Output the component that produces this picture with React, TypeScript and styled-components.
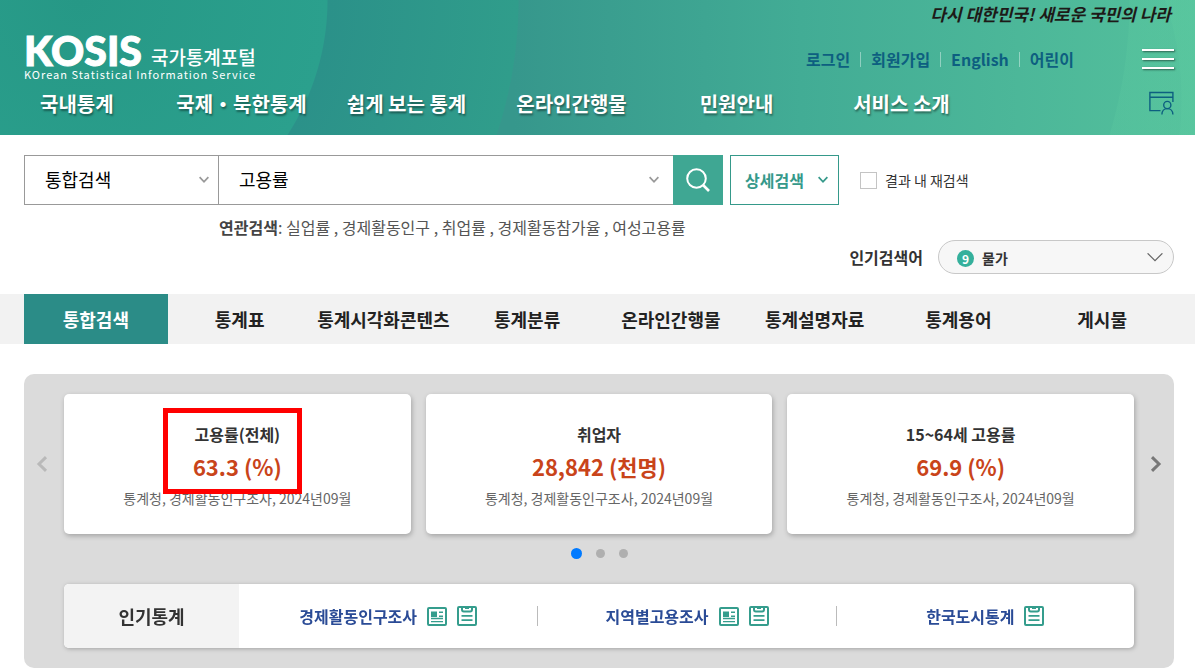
import React from "react";
import styled, { createGlobalStyle } from "styled-components";

const GlobalStyle = createGlobalStyle`
  *, *::before, *::after { box-sizing: border-box; }
  body {
    margin: 0;
    background: #fff;
    color: #222;
    font-family: "Noto Sans CJK KR", "Noto Sans", sans-serif;
    font-size: 16px;
    line-height: 24px;
  }
  button, input, select { font: inherit; color: inherit; margin: 0; }
  button { border: 0; padding: 0; background: none; cursor: pointer; }
  a { color: inherit; text-decoration: none; }
  ul { list-style: none; margin: 0; padding: 0; }
  h1, h2, h3, p { margin: 0; font-size: inherit; font-weight: inherit; }
  svg { display: block; flex: none; }
`;

/* ---------- header ---------- */

const Header = styled.header`
  padding: 0 21px 10px 24px;
  background:
    radial-gradient(circle 248px at 80px 0, #269886 0, #2ba08d 247px, transparent 248px),
    radial-gradient(circle 426px at 93px 0, #2b9189 0, #2b9189 235px, #309d8b 425px, transparent 426px),
    radial-gradient(circle 312px at calc(100% - 325px) 100px, transparent 311px, rgba(92, 202, 160, 0.4) 312px) right top / 50px 100% no-repeat,
    radial-gradient(circle 465px at calc(100% - 530px) 0, transparent 464px, rgba(92, 202, 160, 0.3) 465px) right top / 120px 100% no-repeat,
    linear-gradient(90deg, #36978c 0, #36978c 43%, #42ac95 67%, #54c09c 100%);
`;

const Slogan = styled.p`
  height: 35px;
  padding-right: 3px;
  color: #1d1a18;
  font-size: 17px;
  font-style: italic;
  font-weight: 700;
  line-height: 28px;
  text-align: right;
`;

const Brand = styled.div`
  display: flex;
  align-items: center;
  height: 48px;
`;

const Logo = styled.a`
  display: block;
  height: 48px;
  margin-right: auto;
  color: #fff;
`;

const LogoTop = styled.span`
  display: flex;
  align-items: flex-end;
  gap: 9px;
  height: 32px;
`;

const LogoMark = styled.strong`
  font-family: Lato, sans-serif;
  font-size: 41px;
  font-weight: 900;
  line-height: 32px;
  -webkit-text-stroke: 1px #fff;
`;

const LogoName = styled.span`
  font-size: 19px;
  font-weight: 500;
  line-height: 20px;
`;

const LogoTag = styled.span`
  display: block;
  font-size: 11px;
  letter-spacing: 1px;
  line-height: 14px;
`;

const Utils = styled.ul`
  display: flex;
  margin-right: 68px;
  color: #0d5f80;
  font-weight: 700;

  li + li::before {
    content: "";
    display: inline-block;
    width: 1px;
    height: 15px;
    margin: 0 10px;
    background: rgba(255, 255, 255, 0.4);
    vertical-align: -1px;
  }
`;

const MenuButton = styled.button`
  display: flex;
  flex-direction: column;
  gap: 7px;
  width: 32px;

  span {
    height: 2px;
    background: #fff;
    box-shadow: 1px 1px 2px rgba(0, 0, 0, 0.5);
  }
`;

const NavRow = styled.div`
  display: flex;
  align-items: center;
  height: 42px;
`;

const Nav = styled.nav`
  flex: 1;
  display: grid;
  grid-template-columns: 9fr repeat(5, 11fr);
  margin-right: 165px;
  color: #fff;
  font-size: 20px;
  font-weight: 700;
  line-height: 28px;
  text-align: center;
  text-shadow: 1px 2px 2px rgba(0, 0, 0, 0.4);
  white-space: nowrap;

  a:first-child {
    padding-left: 16px;
    text-align: left;
  }
`;

/* ---------- search ---------- */

const SearchArea = styled.section`
  padding: 20px 21px 20px 24px;
`;

const SearchForm = styled.form`
  display: flex;
  align-items: center;
  height: 50px;
  font-size: 18px;
`;

const FieldBox = styled.div<{ $width: string; $joined?: boolean }>`
  position: relative;
  width: ${(p) => p.$width};
  height: 50px;
  border: 1px solid #999;
  ${(p) => p.$joined && "border-left: 0; border-right: 0;"}
  color: #000;

  select, input {
    width: 100%;
    height: 100%;
    padding: 0 20px 2px;
    border: 0;
    outline: 0;
    background: transparent;
    appearance: none;
  }

  svg, button {
    position: absolute;
    top: 20px;
    right: 9px;
    pointer-events: none;
  }
  button svg { position: static; }
  button { right: 14px; }
`;

const SearchButton = styled.button`
  display: flex;
  align-items: center;
  justify-content: center;
  width: 50px;
  height: 50px;
  background: #3fa793;
`;

const DetailButton = styled.button`
  display: flex;
  align-items: center;
  justify-content: space-between;
  width: 109px;
  height: 50px;
  margin: 0 21px 0 7px;
  padding: 0 10px 0 14px;
  border: 1px solid #35998a;
  color: #35998a;
  font-size: 16px;
  font-weight: 700;
`;

const Recheck = styled.label`
  display: flex;
  align-items: center;
  gap: 8px;
  color: #333;
  font-size: 14px;

  input {
    width: 17px;
    height: 17px;
    border: 1px solid #c4c4c4;
    background: #fff;
    appearance: none;
  }
`;

const Related = styled.p`
  padding: 10px 0 1px 195px;
  color: #555;

  strong { color: #444; }
`;

const Popular = styled.div`
  display: flex;
  align-items: center;
  justify-content: flex-end;
  gap: 15px;
  color: #333;
  font-weight: 700;
`;

const PopularButton = styled.button`
  display: flex;
  align-items: center;
  gap: 8px;
  width: 236px;
  height: 34px;
  padding: 2px 10px 0 18px;
  border: 1px solid #c8c8c8;
  border-radius: 17px;
  background: #f7f7f7;
  font-size: 14px;
  font-weight: 700;

  svg { margin-left: auto; }
`;

const Rank = styled.span`
  width: 17px;
  height: 17px;
  border-radius: 50%;
  background: #35b09c;
  color: #fff;
  font-size: 12px;
  font-weight: 700;
  line-height: 17px;
`;

/* ---------- tabs ---------- */

const TabBar = styled.nav`
  display: grid;
  grid-template-columns: repeat(8, 1fr);
  padding: 0 21px 0 24px;
  background: #f2f2f2;
`;

const Tab = styled.a<{ $active?: boolean }>`
  background: ${(p) => (p.$active ? "#2b8c87" : "transparent")};
  color: ${(p) => (p.$active ? "#fff" : "#222")};
  font-size: 18px;
  font-weight: 700;
  line-height: 50px;
  text-align: center;
  white-space: nowrap;
`;

/* ---------- indicator panel ---------- */

const Panel = styled.section`
  margin: 30px 21px 0 24px;
  padding: 20px 0;
  border-radius: 10px;
  background: #dbdbdb;
`;

const Slider = styled.div`
  display: flex;
`;

const Arrow = styled.button<{ $back?: boolean }>`
  display: flex;
  align-items: center;
  justify-content: ${(p) => (p.$back ? "flex-start" : "flex-end")};
  width: 40px;
  padding: 0 12px;
  color: ${(p) => (p.$back ? "#b9b9b9" : "#777")};
`;

const Cards = styled.div`
  flex: 1;
  display: grid;
  grid-template-columns: repeat(3, 1fr);
  gap: 15px;
`;

const Card = styled.article`
  position: relative;
  padding: 27px 10px 22px;
  border-radius: 5px;
  background: #fff;
  box-shadow: 1px 2px 5px rgba(0, 0, 0, 0.25);
  text-align: center;
`;

const CardTitle = styled.h3`
  color: #333;
  font-weight: 700;
  line-height: 27px;
`;

const CardValue = styled.p`
  color: #c9441a;
  font-size: 22px;
  font-weight: 700;
  line-height: 36px;
`;

const CardSource = styled.p`
  color: #666;
  font-size: 14px;
  line-height: 28px;
`;

const Highlight = styled.span`
  position: absolute;
  top: 14px;
  left: calc(50% - 74px);
  width: 139px;
  height: 86px;
  border: 5px solid #f00;
`;

const Dots = styled.div`
  display: flex;
  align-items: center;
  justify-content: center;
  gap: 14px;
  height: 50px;
  padding-bottom: 12px;
`;

const Dot = styled.button<{ $active?: boolean }>`
  width: ${(p) => (p.$active ? 11 : 9)}px;
  height: ${(p) => (p.$active ? 11 : 9)}px;
  border-radius: 50%;
  background: ${(p) => (p.$active ? "#007aff" : "#afafaf")};
`;

const HotShadow = styled.div`
  filter: drop-shadow(1px 1px 2px rgba(0, 0, 0, 0.25));
`;

const Hot = styled.div`
  display: flex;
  height: 64px;
  margin: 0 40px;
  border-radius: 5px;
  overflow: hidden;
  background: #fff;
`;

const HotTitle = styled.h2`
  width: 175px;
  background: #f3f3f3;
  color: #333;
  font-size: 18px;
  font-weight: 700;
  line-height: 64px;
  text-align: center;
`;

const HotList = styled.ul`
  flex: 1;
  display: grid;
  grid-template-columns: repeat(3, 1fr);
  align-items: center;
`;

const HotItem = styled.li`
  display: flex;
  align-items: center;
  justify-content: center;
  gap: 10px;
  height: 20px;
  color: #2a4b96;
  font-weight: 700;

  & + & { border-left: 1px solid #bbb; }
`;

/* ---------- icons ---------- */

const Chevron = ({ color = "#999" }: { color?: string }) => (
  <svg width="10" height="8" viewBox="0 0 10 8" fill="none" stroke={color} strokeWidth="1.8" aria-hidden="true">
    <path d="M.6 1.2 5 5.8 9.4 1.2" />
  </svg>
);

const WideChevron = () => (
  <svg width="16" height="10" viewBox="0 0 16 10" fill="none" stroke="#666" strokeWidth="1.2" aria-hidden="true">
    <path d="M.6 .3 8 7.700 15.400 .3" />
  </svg>
);

const SideChevron = ({ back }: { back?: boolean }) => (
  <svg width="12" height="16" viewBox="0 0 12 16" fill="none" stroke="currentColor" strokeWidth="3" aria-hidden="true">
    <path d={back ? "M10 1.2 3 8l7 6.8" : "M2 1.2 9 8l-7 6.8"} />
  </svg>
);

const Magnifier = () => (
  <svg width="24" height="24" viewBox="0 0 24 24" fill="none" stroke="#fff" strokeWidth="2" aria-hidden="true">
    <circle cx="10.5" cy="10.5" r="9.3" />
    <path d="m17 17 6 6" strokeWidth="2.6" />
  </svg>
);

const MyPageIcon = () => (
  <svg width="25" height="26" viewBox="0 0 25 26" fill="none" stroke="#0d5f80" strokeWidth="1.4" aria-hidden="true">
    <path d="M11.5 19.6H.9V1.5h23v9.5M.9 6.3h23" />
    <circle cx="18.3" cy="14" r="3.6" />
    <path d="M12.9 23.6c0-3.6 2.2-6 5.4-6s5.6 2.4 5.6 6" />
  </svg>
);

const ReportIcon = () => (
  <svg width="20" height="20" viewBox="0 0 20 20" fill="none" stroke="#359d8d" aria-hidden="true">
    <rect x="1" y="2" width="18" height="17" rx="1" strokeWidth="2" />
    <path d="M4 5.5h6v5.5H4z" fill="#359d8d" stroke="none" />
    <path d="M12 6.2h4M12 10.2h4M4 12.5h12M4 15.6h12" strokeWidth="1.4" />
  </svg>
);

const ClipboardIcon = () => (
  <svg width="20" height="20" viewBox="0 0 20 20" fill="none" stroke="#359d8d" strokeWidth="2" aria-hidden="true">
    <rect x="1" y="1" width="18" height="18" rx="1" />
    <path d="M5 1v2.500c0 1.200.7 1.900 1.800 1.900h6.400c1.100 0 1.800-.7 1.800-1.900V1M8 2h4" />
    <path d="M4.500 9.800h11M4.500 14.200h11" strokeWidth="1.800" />
  </svg>
);

/* ---------- data ---------- */

const utils = ["로그인", "회원가입", "English", "어린이"];
const menu = ["국내통계", "국제・북한통계", "쉽게 보는 통계", "온라인간행물", "민원안내", "서비스 소개"];
const tabs = ["통합검색", "통계표", "통계시각화콘텐츠", "통계분류", "온라인간행물", "통계설명자료", "통계용어", "게시물"];
const related = ["실업률", "경제활동인구", "취업률", "경제활동참가율", "여성고용률"];
const source = "통계청, 경제활동인구조사, 2024년09월";
const cards = [
  { title: "고용률(전체)", value: "63.3 (%)", marked: true },
  { title: "취업자", value: "28,842 (천명)" },
  { title: "15~64세 고용률", value: "69.9 (%)" },
];
const hot = [
  { name: "경제활동인구조사", report: true },
  { name: "지역별고용조사", report: true },
  { name: "한국도시통계", report: false },
];

export default function App() {
  return (
    <>
      <GlobalStyle />
      <Header>
        <Slogan>다시 대한민국! 새로운 국민의 나라</Slogan>
        <Brand>
          <Logo href="#">
            <LogoTop>
              <LogoMark>KOSIS</LogoMark>
              <LogoName>국가통계포털</LogoName>
            </LogoTop>
            <LogoTag>KOrean Statistical Information Service</LogoTag>
          </Logo>
          <Utils>
            {utils.map((u) => (
              <li key={u}><a href="#">{u}</a></li>
            ))}
          </Utils>
          <MenuButton type="button" aria-label="전체메뉴">
            <span /><span /><span />
          </MenuButton>
        </Brand>
        <NavRow>
          <Nav>
            {menu.map((m) => (
              <a href="#" key={m}>{m}</a>
            ))}
          </Nav>
          <a href="#" aria-label="마이페이지"><MyPageIcon /></a>
        </NavRow>
      </Header>

      <SearchArea>
        <SearchForm onSubmit={(e) => e.preventDefault()}>
          <FieldBox $width="195px">
            <select aria-label="검색 범위" defaultValue="통합검색">
              <option>통합검색</option>
            </select>
            <Chevron />
          </FieldBox>
          <FieldBox $width="454px" $joined>
            <input type="text" aria-label="검색어" defaultValue="고용률" />
            <button type="button" aria-label="자동완성 열기"><Chevron /></button>
          </FieldBox>
          <SearchButton type="submit" aria-label="검색"><Magnifier /></SearchButton>
          <DetailButton type="button">상세검색 <Chevron color="#35998a" /></DetailButton>
          <Recheck>
            <input type="checkbox" />
            결과 내 재검색
          </Recheck>
        </SearchForm>
        <Related>
          <strong>연관검색</strong>:{" "}
          {related.map((r, i) => (
            <React.Fragment key={r}>
              {i > 0 && " , "}
              <a href="#">{r}</a>
            </React.Fragment>
          ))}
        </Related>
        <Popular>
          <span>인기검색어</span>
          <PopularButton type="button">
            <Rank>9</Rank>
            물가
            <WideChevron />
          </PopularButton>
        </Popular>
      </SearchArea>

      <TabBar>
        {tabs.map((t, i) => (
          <Tab href="#" key={t} $active={i === 0}>{t}</Tab>
        ))}
      </TabBar>

      <Panel>
        <Slider>
          <Arrow type="button" aria-label="이전" $back><SideChevron back /></Arrow>
          <Cards>
            {cards.map((c) => (
              <Card key={c.title}>
                <CardTitle>{c.title}</CardTitle>
                <CardValue>{c.value}</CardValue>
                <CardSource>{source}</CardSource>
                {c.marked && <Highlight />}
              </Card>
            ))}
          </Cards>
          <Arrow type="button" aria-label="다음"><SideChevron /></Arrow>
        </Slider>
        <Dots>
          <Dot type="button" aria-label="1" $active />
          <Dot type="button" aria-label="2" />
          <Dot type="button" aria-label="3" />
        </Dots>
        <HotShadow>
          <Hot>
            <HotTitle>인기통계</HotTitle>
            <HotList>
              {hot.map((h) => (
                <HotItem key={h.name}>
                  <a href="#">{h.name}</a>
                  {h.report && <a href="#" aria-label="보도자료"><ReportIcon /></a>}
                  <a href="#" aria-label="통계표"><ClipboardIcon /></a>
                </HotItem>
              ))}
            </HotList>
          </Hot>
        </HotShadow>
      </Panel>
    </>
  );
}
